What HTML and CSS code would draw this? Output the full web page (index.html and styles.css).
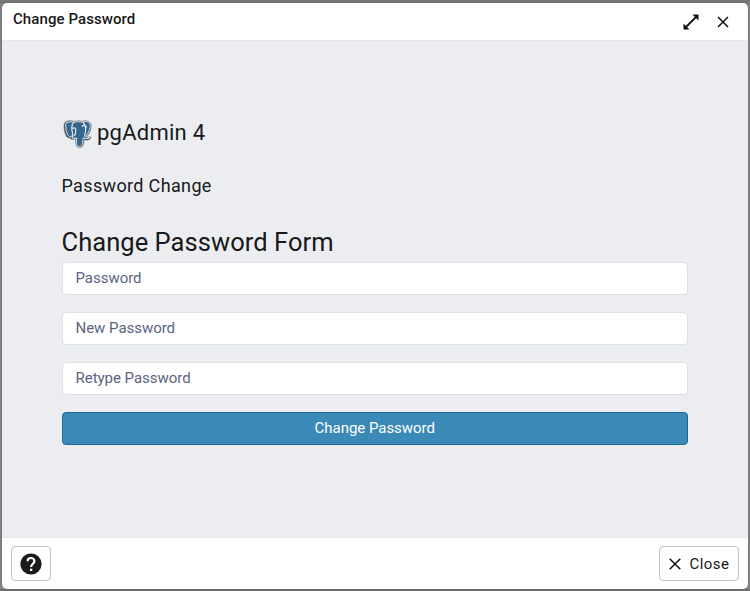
FILE: index.html
```html
<!DOCTYPE html>
<html lang="en">
<head>
<meta charset="utf-8">
<title>Change Password</title>
<link rel="stylesheet" href="styles.css">
</head>
<body>
<section class="dialog">
  <header class="titlebar">
    <span class="title">Change Password</span>
    <div class="window-actions">
      <svg class="expand" viewBox="0 0 18 18"><path d="M4 14 14 4" fill="none" stroke="#111" stroke-width="1.8"/><path d="M10.5 1.5h6v6zM1.5 10.5v6h6z" fill="#111"/></svg>
      <svg class="dismiss" viewBox="0 0 12 12"><path d="m1 1 10 10M11 1 1 11" fill="none" stroke="#111" stroke-width="1.5"/></svg>
    </div>
  </header>
  <main class="content">
    <div class="brand">
      <svg class="logo" viewBox="0 0 30 30">
        <path d="M2 3C5 .5 9 1 12 2c3-1 5-1 8 0 4-2 8 0 9 3 1 5-2 10-4 12l1 1h3c0 3-4 4-7 3-1 3 0 8-5 8-4 0-4-5-4-9-2 1-5 1-6-1-4 1-6-7-6-12 0-2 0-3 1-4Z" fill="#444c55" stroke="#777b80" stroke-width=".6"/>
        <path d="M3 4C6 2 9 2 12 3c3-1 5-1 8 0 3-2 7-1 8 2 1 4-2 9-4 12 1 2 3 1 4 2-2 1-5 1-7 0-1 4 0 9-4 9s-3-5-3-9c-2 1-4 1-5-1-4 1-6-6-6-10 0-2-1-3 0-4Z" fill="#336791" stroke="#e8eaed" stroke-width="1"/>
        <path d="M11 3c-3 3-2 7-1 12-1 2-1 3 0 4m11-16c3 4 3 7 2 11-1 2-1 3 0 4M10 9c2-1 4 0 3 3 0 2 1 3-2 5m9-10c2-2 4-1 4 1" fill="none" stroke="#e8eaed" stroke-width="1.2" stroke-linecap="round"/>
      </svg>
      <span class="brand-name">pgAdmin 4</span>
    </div>
    <h2 class="subtitle">Password Change</h2>
    <h1 class="heading">Change Password Form</h1>
    <form class="form">
      <input class="field" type="password" placeholder="Password" aria-label="Password">
      <input class="field" type="password" placeholder="New Password" aria-label="New Password">
      <input class="field" type="password" placeholder="Retype Password" aria-label="Retype Password">
      <button class="submit" type="button">Change Password</button>
    </form>
  </main>
  <footer class="footer">
    <button class="button help" type="button" aria-label="Help">
      <svg class="help-icon" viewBox="0 0 22 22"><circle cx="11" cy="11" r="10.6" fill="#1b1b1b"/><path d="M7.6 8.2c0-4.3 6.8-4.3 6.8 0 0 2.5-3.3 2.7-3.3 5.7" fill="none" stroke="#fff" stroke-width="2.2"/><path d="M10 15.8h2.3V18H10z" fill="#fff"/></svg>
    </button>
    <button class="button close" type="button">
      <svg class="close-icon" viewBox="0 0 12 12"><path d="m.7.7 10.6 10.6M11.3.7.7 11.3" fill="none" stroke="#111" stroke-width="1.5"/></svg>
      <span>Close</span>
    </button>
  </footer>
</section>
</body>
</html>
```
FILE: styles.css
```css
* { box-sizing: border-box; }
body {
  margin: 0;
  height: 591px;
  padding: 3px 2px 2px;
  overflow: hidden;
  background: linear-gradient(#777 0 3px, #858588 3px 589px, #707070 589px);
  font-family: Roboto, sans-serif;
  color: #191919;
}
.dialog {
  display: flex;
  flex-direction: column;
  width: 746px;
  height: 586px;
  overflow: hidden;
  border-radius: 5px;
  background: #fff;
  box-shadow: 0 0 2px #555;
}
.titlebar {
  display: flex;
  justify-content: space-between;
  height: 38px;
  padding: 7px 19px 0 11px;
  border-bottom: 1px solid #e3e5e9;
}
.title { font-size: 15px; font-weight: 500; line-height: 19px; letter-spacing: .08px; }
.window-actions { display: flex; gap: 17px; padding-top: 3px; }
.expand { width: 18px; height: 18px; }
.dismiss { width: 12px; height: 12px; margin-top: 3px; }
.content {
  flex: 1;
  padding: 75px 60px 0 59.5px;
  background: #ebedf1;
}
.brand { display: flex; align-items: center; gap: 5.5px; height: 34px; }
.logo { width: 29px; height: 30px; margin: 2px 0 0 1px; }
.brand-name { font-size: 22px; line-height: 32px; letter-spacing: .25px; }
.subtitle { margin: 24px 0 0; font-size: 18px; line-height: 24px; font-weight: 400; letter-spacing: .35px; }
.heading { margin: 26px 0 2px; font-size: 25.5px; line-height: 36px; font-weight: 400; letter-spacing: .05px; }
.form { display: flex; flex-direction: column; gap: 17px; }
.field, .submit { width: 100%; height: 33px; margin: 0; border-radius: 4px; font: 15px Roboto, sans-serif; letter-spacing: -.03px; }
.field { padding: 0 13px 2px; border: 1px solid #dce0e7; background: #fff; }
.field::placeholder { color: #5b6482; opacity: 1; }
.submit { padding: 0 0 1px; border: 1px solid #1d699b; background: #3b89b6; color: #fff; }
.footer {
  display: flex;
  justify-content: space-between;
  height: 52px;
  padding: 8px 9px 0;
  border-top: 1px solid #e1e4e9;
}
.button {
  display: flex;
  align-items: center;
  justify-content: center;
  height: 35px;
  padding: 0;
  border: 1px solid #bdc5d2;
  border-radius: 4px;
  background: #fff;
  color: #191919;
  font: 15px Roboto, sans-serif;
  letter-spacing: .5px;
}
.help { width: 40px; }
.help-icon { width: 22px; height: 22px; }
.close { width: 80px; gap: 8px; padding-left: 1px; }
.close-icon { width: 12px; height: 12px; }
```
